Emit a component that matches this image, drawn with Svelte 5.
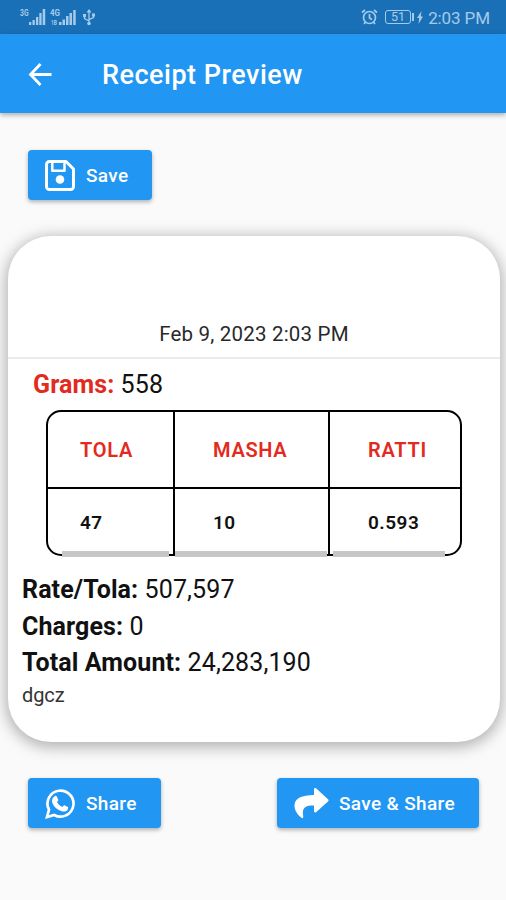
<script>
  const columns = [
    { label: 'TOLA', value: '47' },
    { label: 'MASHA', value: '10' },
    { label: 'RATTI', value: '0.593' },
  ];
  const totals = [
    { label: 'Rate/Tola:', value: '507,597' },
    { label: 'Charges:', value: '0' },
    { label: 'Total Amount:', value: '24,283,190' },
  ];
</script>

<div class="screen">
  <div class="status">
    <div class="signals">
      <svg width="78" height="20" viewBox="0 0 78 20" fill="currentColor">
        <text x="0" y="9" font-size="9" font-weight="700" textLength="8.500" lengthAdjust="spacingAndGlyphs">3G</text>
        <path d="M9 15h2.300v3H9zM12.500 13h2.300v5h-2.300zM16 10h2.300v8H16zM19.300 6h2.300v12h-2.300zM22.700 2h2.500v16h-2.500z" />
        <text x="30" y="9" font-size="9" font-weight="700" textLength="10" lengthAdjust="spacingAndGlyphs">4G</text>
        <text x="31" y="18" font-size="6.500" font-weight="700" textLength="6" lengthAdjust="spacingAndGlyphs">1B</text>
        <path d="M39 15h2.500v3H39zM42.500 12.500H45V18h-2.500zM46 9h2.500v9H46zM49.500 6H52v12h-2.500zM53.200 3h2.500v15h-2.500z" />
        <path d="M69 3v14M64.500 8v3.500l4.500 2.500M73.500 7.500v3l-4.500 2.200" fill="none" stroke="currentColor" stroke-width="1.300" />
        <path d="M66.500 5.500L69 2l2.500 3.500zM63 7h3v3h-3zM72 6.500h3v3h-3z" /><circle cx="69" cy="16.500" r="1.800" />
      </svg>
    </div>
    <div class="system">
      <svg width="17" height="18" viewBox="0 0 17 18" fill="none" stroke="currentColor" stroke-width="1.700">
        <circle cx="8.500" cy="9.500" r="6" /><path d="M8.500 6v4l2.500 1.500M1 4.500L4 2M16 4.500L13 2M4.500 14L3 16M12.500 14l1.500 2" />
      </svg>
      <div class="battery">51</div><i class="tip"></i>
      <svg class="bolt" width="6" height="13" viewBox="0 0 6 13" fill="currentColor"><path d="M4.500 0L0 7h2.300L1.500 13 6 5.500H3.700z" /></svg>
      <span class="clock">2:03 PM</span>
    </div>
  </div>

  <header>
    <svg width="24" height="24" viewBox="0 0 24 24" fill="none" stroke="#fff" stroke-width="2.800"><path d="M23.500 11.500H3M12.500 1L2.500 11.500 12.500 22" /></svg>
    <h1>Receipt Preview</h1>
  </header>

  <main>
    <button class="save">
      <svg width="30" height="31" viewBox="0 0 30 31" fill="none" stroke="#fff" stroke-width="3" stroke-linejoin="round">
        <path d="M4.500 1.500H21L28.500 9v17.500a3 3 0 0 1-3 3h-21a3 3 0 0 1-3-3v-22a3 3 0 0 1 3-3z" />
        <path d="M7.300 2v8.700h12.200V2" stroke-width="2.500" /><circle cx="15" cy="19.500" r="4.300" fill="#fff" stroke="none" />
      </svg>
      <span>Save</span>
    </button>

    <section class="card">
      <div class="date"><span>Feb 9, 2023 2:03 PM</span></div>
      <p class="grams"><b>Grams:</b> 558</p>
      <div class="table">
        {#each columns as column}
          <div class="column">
            <div class="cell label">{column.label}</div>
            <div class="cell value">{column.value}</div>
            <i class="scroll"></i>
          </div>
        {/each}
      </div>
      <div class="totals">
        {#each totals as row}
          <p><b>{row.label}</b> {row.value}</p>
        {/each}
      </div>
      <p class="note">dgcz</p>
    </section>

    <div class="actions">
      <button class="share">
        <svg width="30" height="31" viewBox="0 0 30 31" fill="none">
          <path d="M2 29l2-7.300A13 13 0 1 1 9.200 27z" stroke="#fff" stroke-width="2.700" stroke-linejoin="miter" />
          <path d="M9.700 8.200c.5-.5 1.700-.5 2.100.2l1.500 3.400c.3.800-.9 1.700-1.300 2.300 1.200 2.300 3 3.900 5.300 4.900.8-.6 1.500-2 2.200-1.700l3.200 1.600c.7.400.5 1.700.1 2.500-.8 1.600-3.300 2.500-5.300 2-5.200-1.200-9-4.600-10.400-9.300-.6-2.200.7-4.800 2.600-5.900z" fill="#fff" />
        </svg>
        <span>Share</span>
      </button>
      <button class="save-share">
        <svg width="35" height="31" viewBox="0 0 35 31" fill="#fff">
          <path d="M20 1.500c0-1.400 1.200-1.800 2.300-.9L34 11.200c.8.700.8 1.600 0 2.300L22.300 24c-1.100 1-2.300.5-2.300-.9v-5.500c-7.800-.2-12.500 1.500-10.800 10.500.2 1.700-.9 2.700-2.100 1.500C3.100 26.300.5 22.300.5 17.500.5 10 8 7.100 20 7z" />
        </svg>
        <span>Save &amp; Share</span>
      </button>
    </div>
  </main>
</div>

<style>
  :global(body) { margin: 0; }
  .screen { width: 506px; height: 900px; overflow: hidden; display: flex; flex-direction: column; background: #fafafa; font-family: Roboto, sans-serif; color: #111; }
  .screen * { box-sizing: border-box; }
  .status { height: 34px; flex: none; background: #1a70b6; color: #a5cbea; display: flex; justify-content: space-between; align-items: center; padding: 0 16px 0 20px; }
  .signals, .system { display: flex; align-items: center; }
  .signals svg { display: block; }
  .battery { width: 26px; height: 14px; margin-left: 7px; border: 1px solid currentColor; border-radius: 3px; font-size: 12.500px; line-height: 12px; text-align: center; }
  .tip { width: 2px; height: 8px; margin-left: 1px; background: currentColor; }
  .bolt { margin: 0 5px 0 3px; }
  .clock { font-size: 17px; line-height: 20px; padding-top: 2px; white-space: nowrap; letter-spacing: -.1px; }
  header { height: 79px; flex: none; background: #2296f3; box-shadow: 0 2px 5px rgba(0,0,0,.32); display: flex; align-items: center; padding: 2px 28px 0; }
  h1 { margin: 0 0 0 50px; font-size: 27px; font-weight: 500; line-height: 34px; color: #fff; letter-spacing: .5px; white-space: nowrap; }
  main { flex: 1; padding: 37px 6px 0 8px; display: flex; flex-direction: column; align-items: stretch; }
  button { height: 50px; border: 0; border-radius: 4px; background: #2296f3; box-shadow: 0 2px 4px rgba(0,0,0,.3); display: flex; align-items: center; padding: 0 0 0 17px; color: #fff; font: 500 19px/24px Roboto, sans-serif; letter-spacing: .35px; white-space: nowrap; }
  button svg { flex: none; }
  button span { margin-left: 11px; padding-top: 1px; }
  .save { width: 124px; margin-left: 20px; flex: none; }
  .card { height: 506px; flex: none; margin-top: 36px; border-radius: 43px; background: #fff; box-shadow: 0 3px 15px 2px rgba(0,0,0,.3); display: flex; flex-direction: column; }
  .date { height: 123px; flex: none; border-bottom: 2px solid #ebebeb; display: flex; align-items: flex-end; justify-content: center; padding-bottom: 9px; font-size: 20.500px; line-height: 28px; letter-spacing: .2px; color: #292929; }
  p { margin: 0; white-space: nowrap; }
  .grams { height: 51px; padding: 9px 0 0 25px; font-size: 25px; line-height: 34px; letter-spacing: .1px; }
  b { font-weight: 700; }
  .grams b, .label { color: #e32a20; }
  .table { width: 416px; height: 146px; flex: none; margin-left: 38px; border: 2px solid #000; border-radius: 15px; display: grid; grid-template-columns: 125px 155px 132px; }
  .column { position: relative; display: flex; flex-direction: column; }
  .column + .column { border-left: 2px solid #000; }
  .cell { display: flex; align-items: center; font-size: 20px; font-weight: 600; line-height: 26px; }
  .column .cell { padding-left: 38px; }
  .column:first-child .cell { padding-left: 32px; }
  .label { height: 77px; border-bottom: 2px solid #000; letter-spacing: .7px; }
  .value { height: 65px; padding-top: 2px; font-size: 19px; letter-spacing: .5px; }
  .scroll { position: absolute; left: 0; right: 1px; bottom: -3px; height: 6px; background: #c6c6c6; }
  .column:first-child .scroll { left: 14px; right: 4px; }
  .column:last-child .scroll { left: 3px; right: 15px; }
  .totals { padding: 16px 0 0 14px; font-size: 25px; line-height: 36.500px; letter-spacing: .11px; }
  .note { padding-left: 14px; font-size: 20px; line-height: 26px; letter-spacing: -.1px; color: #333; }
  .actions { margin: 36px 21px 0 20px; display: flex; justify-content: space-between; }
  .share { width: 133px; }
  .save-share { width: 202px; }
  .save-share span { margin-left: 10px; }
</style>
